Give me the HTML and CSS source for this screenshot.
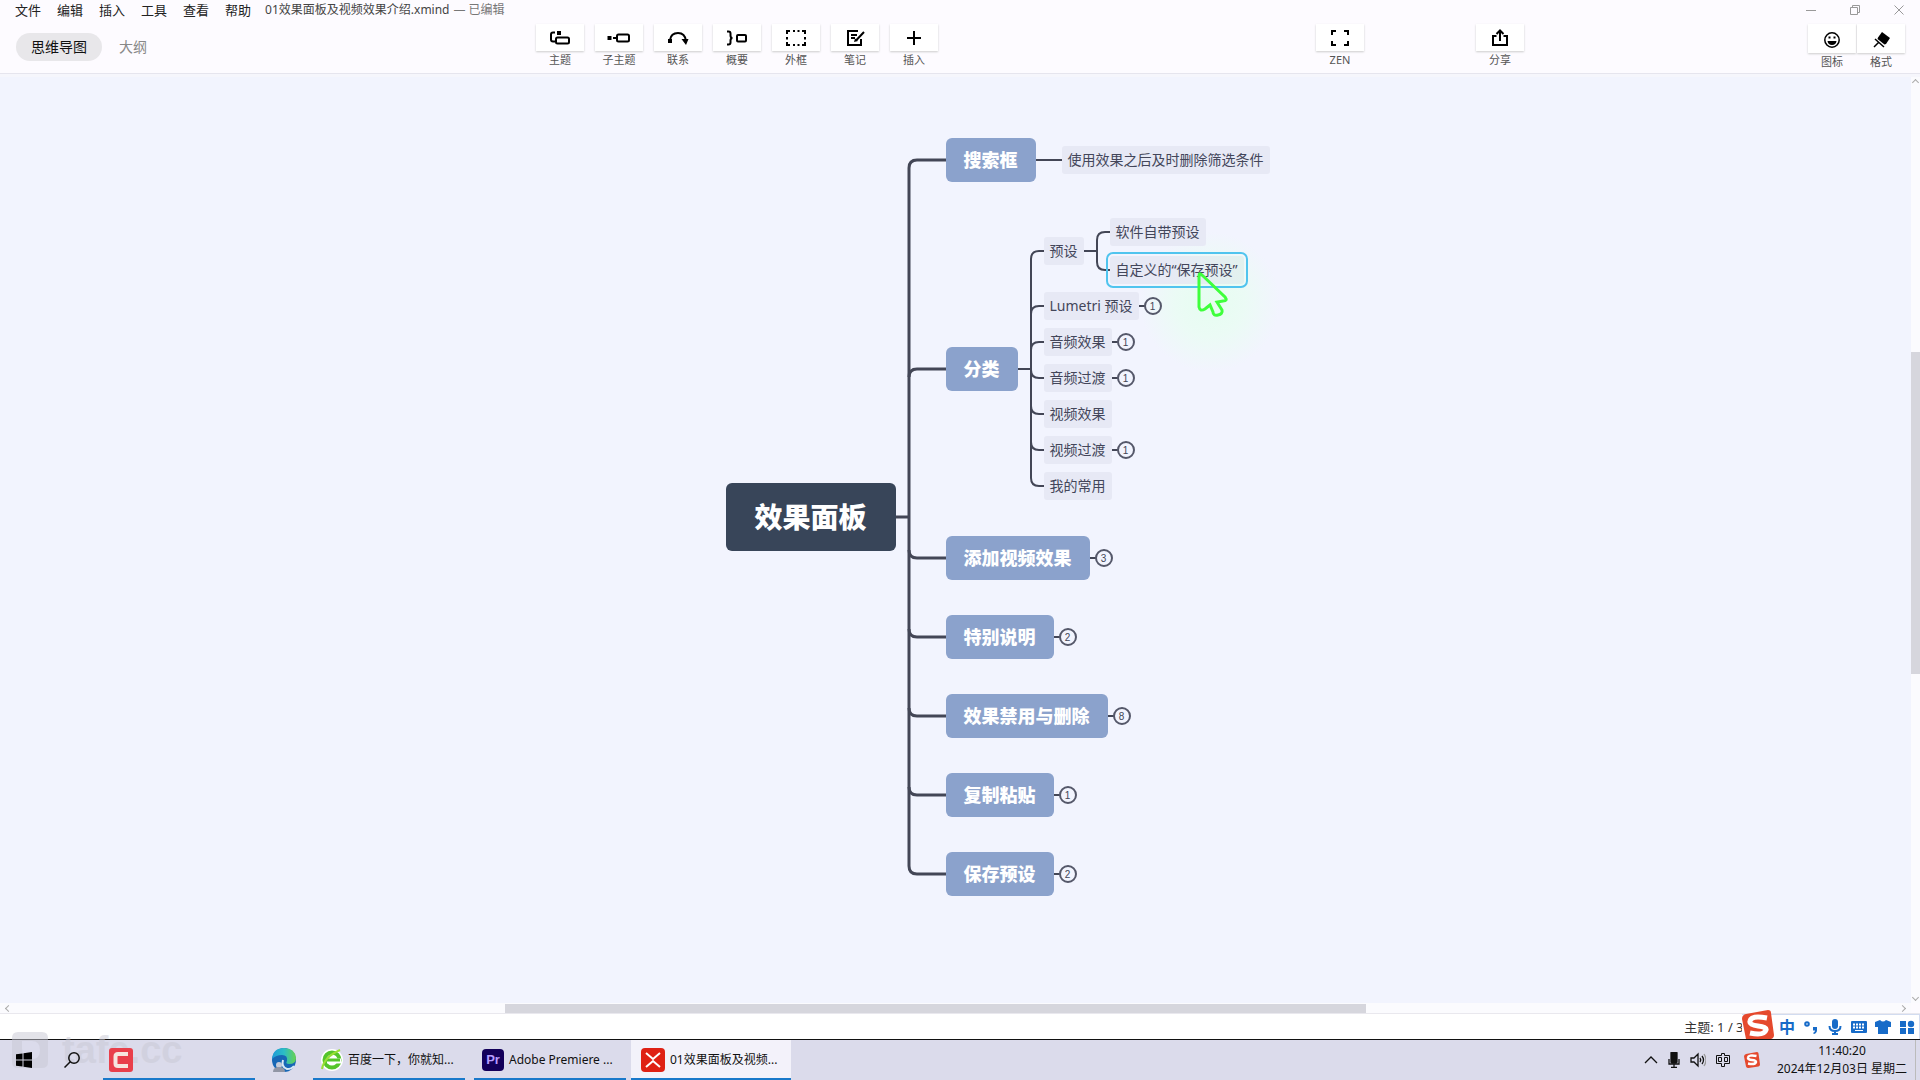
FILE: index.html
```html
<!DOCTYPE html>
<html lang="zh-CN">
<head>
<meta charset="utf-8">
<title>01效果面板及视频效果介绍.xmind</title>
<link rel="stylesheet" href="styles.css">
</head>
<body>
<header class="header">
  <div class="titlebar">
    <nav class="menu">
      <button>文件</button><button>编辑</button><button>插入</button><button>工具</button><button>查看</button><button>帮助</button>
    </nav>
    <span class="doc-name">01效果面板及视频效果介绍.xmind</span>
    <span class="doc-state">— 已编辑</span>
    <div class="window-buttons">
      <button aria-label="最小化"><svg width="12" height="12" viewBox="0 0 12 12"><path d="M1 6.500h10"/></svg></button>
      <button aria-label="还原"><svg width="12" height="12" viewBox="0 0 12 12"><path d="M1.500 3.500h7v7h-7zM3.500 3.500v-2h7v7h-2"/></svg></button>
      <button aria-label="关闭"><svg width="12" height="12" viewBox="0 0 12 12"><path d="M1.500 1.500l9 9M10.500 1.500l-9 9"/></svg></button>
    </div>
  </div>
  <div class="toolbar">
    <div class="tabs">
      <button class="tab active">思维导图</button>
      <button class="tab">大纲</button>
    </div>
    <div class="tools">
      <button class="tool"><span class="face"><svg class="ico" viewBox="0 0 22 18"><path d="M6 3.500H4q-2 0-2 2v5q0 2 2 2h2"/><rect x="7" y="8.500" width="13" height="6" rx="1.500"/><path class="solid" d="M8 2h4v4H8z"/></svg></span>主题</button>
      <button class="tool"><span class="face"><svg class="ico wide" viewBox="0 0 24 18"><rect x="10" y="5.500" width="12" height="7" rx="1.500"/><path d="M6 9h3"/><path class="solid" d="M.5 7h4v4h-4z"/></svg></span>子主题</button>
      <button class="tool"><span class="face"><svg class="ico" viewBox="0 0 22 18"><path d="M3 11q1-7 8-7t8 8"/><path class="solid" d="M1 10h4v4H1zM14.500 10h7l-2.500 6z"/></svg></span>联系</button>
      <button class="tool"><span class="face"><svg class="ico" viewBox="0 0 22 18"><path d="M1 2.500h1.500q2 0 2 2v2q0 2.500 2 2.500-2 0-2 2.500v2q0 2-2 2H1"/><rect x="11" y="6" width="9" height="6.500" rx="1"/></svg></span>概要</button>
      <button class="tool"><span class="face"><svg class="ico" viewBox="0 0 22 18"><path d="M2 5V2h3M8 2h2M12.500 2h2M17 2h3v3M20 8v2.500M20 13v3h-3M14.500 16h-2M10 16H8M5 16H2v-3M2 10.500V8"/></svg></span>外框</button>
      <button class="tool"><span class="face"><svg class="ico" viewBox="0 0 22 18"><path d="M14 2H4v14h13V10M7 6h6M7 9h4M20 3l-8 8.500"/><path class="solid" d="M11 9.500l3 2.500-4 1z"/></svg></span>笔记</button>
      <button class="tool"><span class="face"><svg class="ico" viewBox="0 0 22 18"><path d="M11 2v14M4 9h14"/></svg></span>插入</button>
    </div>
    <div class="zen">
      <button class="tool"><span class="face"><svg class="ico" viewBox="0 0 22 18"><path d="M3 6V2h4M15 2h4v4M19 12v4h-4M7 16H3v-4"/></svg></span>ZEN</button>
    </div>
    <div class="share">
      <button class="tool"><span class="face"><svg class="ico" viewBox="0 0 22 18"><path d="M7.500 7H4v9h14V7h-3.500M11 12V2M7.500 5L11 1.500 14.500 5"/></svg></span>分享</button>
    </div>
    <div class="panels">
      <button class="tool"><span class="face tall"><svg class="ico fine" viewBox="0 0 22 18"><circle cx="11" cy="9" r="7.200"/><path class="solid" d="M7.500 5.500h2v2h-2zM12.500 5.500h2v2h-2zM6.500 10h9q-.5 4-4.500 4t-4.500-4z"/></svg></span>图标</button>
      <button class="tool"><span class="face tall"><svg class="ico fine" viewBox="0 0 22 18"><path class="solid" d="M12 1l8 6-4 6-1.500.5-7-5.500.5-1.500z"/><path d="M5 8l9 8M9 11l-5 5"/></svg></span>格式</button>
    </div>
  </div>
</header>

<main class="workspace">
  <section class="canvas">
    <div class="map">
      <div class="glow"></div>
      <svg class="edges" viewBox="0 0 600 800" width="600" height="800">
        <g class="thick">
          <path d="M246 40h-29q-8 0-8 8v698q0 8 8 8h29"/>
          <path d="M196 397h13"/>
          <path d="M246 249h-29q-8 0-8 8M246 438h-29q-8 0-8-8M246 517h-29q-8 0-8-8M246 596h-29q-8 0-8-8M246 675h-29q-8 0-8-8"/>
        </g>
        <g class="thin">
          <path d="M336 40h26M318 249h13M384 131h13"/>
          <path d="M344 131h-5q-8 0-8 8v219q0 8 8 8h5"/>
          <path d="M344 186h-5q-8 0-8 8M344 222h-5q-8 0-8 8M344 258h-5q-8 0-8-8M344 294h-5q-8 0-8-8M344 330h-5q-8 0-8-8"/>
          <path d="M410 112h-5q-8 0-8 8v22q0 8 8 8h5"/>
          <path d="M439 186h6M412 222h6M412 258h6M412 330h6M390 438h6M354 517h6M408 596h6M354 675h6M354 754h6"/>
        </g>
      </svg>
      <div class="node root">效果面板</div>
      <div class="node branch b1">搜索框</div>
      <div class="node branch b2">分类</div>
      <div class="node branch b3">添加视频效果</div>
      <div class="node branch b4">特别说明</div>
      <div class="node branch b5">效果禁用与删除</div>
      <div class="node branch b6">复制粘贴</div>
      <div class="node branch b7">保存预设</div>
      <div class="node leaf l1">使用效果之后及时删除筛选条件</div>
      <div class="node leaf l2">预设</div>
      <div class="node leaf l3">软件自带预设</div>
      <div class="node leaf l4 selected">自定义的“保存预设”</div>
      <div class="node leaf l5">Lumetri 预设</div>
      <div class="node leaf l6">音频效果</div>
      <div class="node leaf l7">音频过渡</div>
      <div class="node leaf l8">视频效果</div>
      <div class="node leaf l9">视频过渡</div>
      <div class="node leaf l10">我的常用</div>
      <button class="count c1">1</button>
      <button class="count c2">1</button>
      <button class="count c3">1</button>
      <button class="count c4">1</button>
      <button class="count c5">3</button>
      <button class="count c6">2</button>
      <button class="count c7">8</button>
      <button class="count c8">1</button>
      <button class="count c9">2</button>
      <svg class="pointer" width="34" height="48" viewBox="0 0 34 48"><path d="M3 6Q3 2 6 5l23 22q3 4-2 4l-6 1 5 8q1 4-4 5t-5-3l-3-7-5 4q-5 3-6-2z"/></svg>
    </div>
  </section>
  <div class="vscroll"><i class="arrow up"></i><span class="vthumb"></span><i class="arrow down"></i></div>
  <div class="hscroll"><i class="arrow left"></i><span class="hthumb"></span><i class="arrow right"></i></div>
</main>

<footer class="status">
  <span class="topic-count">主题: 1 / 35</span>
  <div class="ime">
    <svg class="ime-logo" width="32" height="32" viewBox="0 0 32 32"><path class="red" d="M4 4L26 0q3 0 3 3l3 22q0 3-3 4L9 32q-4 0-5-3L0 9q0-4 4-5z"/><path class="s" d="M25 8q-16-3-17 3-1 4 8 5t8 4q-2 6-16 3"/></svg>
    <span class="ime-mode">中</span>
    <svg width="16" height="16" viewBox="0 0 16 16"><circle class="line" cx="4" cy="5" r="1.800"/><path class="fill" d="M10 8h4v3q0 3-3 4l-1-1q2-1 2-2.500h-2z"/></svg>
    <svg width="16" height="16" viewBox="0 0 16 16"><rect class="fill" x="5" y="0" width="6" height="10" rx="3"/><path class="line" d="M2.500 7q0 5 5.500 5t5.500-5M8 12v3M5 15h6"/></svg>
    <svg width="16" height="16" viewBox="0 0 16 16"><rect class="fill" y="2" width="16" height="12" rx="1"/><path class="dots" d="M2 5.500h12M2 8.500h12"/><path class="bar" d="M4 11.500h8"/></svg>
    <svg width="16" height="16" viewBox="0 0 16 16"><path class="fill" d="M0 3l5-2q3 3 6 0l5 2v5h-3v7H3V8H0z"/></svg>
    <svg width="16" height="16" viewBox="0 0 16 16"><path class="fill" d="M1 2h6v6H1zM1 9h6v6H1zM9 9h6v6H9z"/><circle class="fill" cx="12" cy="5" r="3.200"/></svg>
  </div>
</footer>

<footer class="taskbar">
  <div class="watermark" aria-hidden="true"><svg width="36" height="36" viewBox="0 0 36 36"><path d="M6 0h24q6 0 6 6v24q0 6-6 6H6q-6 0-6-6V6q0-6 6-6zM10 9v7q0 11 10 11 8 0 8-9t-8-9z" fill-rule="evenodd"/></svg><span>tafe.cc</span></div>
  <button class="start" aria-label="开始"><svg width="16" height="16" viewBox="0 0 16 16"><path d="M0 2.300L6.500 1.400V7.500H0zM7.500 1.200L16 0V7.500H7.500zM0 8.500H6.500V14.600L0 13.700zM7.500 8.500H16V16L7.500 14.800z"/></svg></button>
  <button class="find" aria-label="搜索"><svg width="16" height="16" viewBox="0 0 16 16"><circle cx="10" cy="6" r="5.200"/><path d="M6.300 9.700L.5 15.500"/></svg></button>
  <button class="task open camtasia" aria-label="Camtasia"><svg width="24" height="24" viewBox="0 0 24 24"><rect width="24" height="24" rx="3" fill="#e93f4b"/><path d="M19 6H9Q6.500 6 6.500 8.500v7Q6.500 18 9 18h10" fill="none" stroke="#f6e6df" stroke-width="4"/></svg></button>
  <button class="task edge" aria-label="Edge"><svg width="24" height="24" viewBox="0 0 24 24"><defs><linearGradient id="sea" x1="0" y1="0" x2="1" y2="0"><stop offset="0" stop-color="#1f9bd8"/><stop offset=".5" stop-color="#2bbdc6"/><stop offset="1" stop-color="#68d34e"/></linearGradient></defs><circle cx="12" cy="12" r="12" fill="#1767b5"/><path d="M0 11Q1 0 12 0q11 0 12 10 0 6-7 6-4 0-2-3 1-6-5-6-6 0-10 4z" fill="url(#sea)"/><path d="M11 12q-2 7 4 9 5 0 7-3" fill="none" stroke="#d9e8f5" stroke-width="2"/><circle cx="7" cy="17" r="3" fill="#c5cbd8"/><path d="M1 24q0-5 6-5t6 5z" fill="#9196a5"/></svg></button>
  <button class="task open browser"><svg width="22" height="22" viewBox="0 0 22 22"><circle cx="11" cy="11" r="11" fill="#fff"/><circle cx="11" cy="11" r="7.500" fill="none" stroke="#55c52b" stroke-width="4"/><path d="M6 12h14" stroke="#fff" stroke-width="5"/><path d="M5 11h14" stroke="#55c52b" stroke-width="3"/><path d="M1 20Q3 8 19 1" fill="none" stroke="#99df35" stroke-width="2"/></svg><span>百度一下，你就知...</span></button>
  <button class="task open premiere"><svg width="22" height="22" viewBox="0 0 22 22"><rect width="22" height="22" rx="4" fill="#13005a"/><text x="11" y="15" text-anchor="middle" fill="#b69cff">Pr</text></svg><span>Adobe Premiere ...</span></button>
  <button class="task open current"><svg width="24" height="24" viewBox="0 0 24 24"><rect width="24" height="24" rx="4" fill="#df2114"/><path d="M5 5l7 6 7-6M5 19l7-6 7 6" fill="none" stroke="#fff" stroke-width="2"/></svg><span>01效果面板及视频...</span></button>
  <div class="tray">
    <svg width="14" height="16" viewBox="0 0 14 16"><path d="M1 11l6-6 6 6"/></svg>
    <svg width="12" height="16" viewBox="0 0 12 16"><rect class="ink" x="3" y="0" width="6" height="11" rx="1"/><path d="M1 7v5h10V7M6 12v4M3 15.500h6"/></svg>
    <svg width="16" height="16" viewBox="0 0 16 16"><path d="M1 6v4h3l4 4V2L4 6zM10 6q1.500 2 0 4M12 4q3 4 0 8"/><path class="faint" d="M14 2q4 6 0 12"/></svg>
    <svg class="hair" width="14" height="16" viewBox="0 0 14 16"><path d="M5.500 1.500h3v2h5v8h-5v3h-3v-3h-5v-8h5zM2.500 5.500h3v4h-3zM8.500 5.500h3v4h-3z"/></svg>
    <svg class="ime-small" width="16" height="16" viewBox="0 0 32 32"><path class="red" d="M4 4L26 0q3 0 3 3l3 22q0 3-3 4L9 32q-4 0-5-3L0 9q0-4 4-5z"/><path class="s" d="M25 8q-16-3-17 3-1 4 8 5t8 4q-2 6-16 3"/></svg>
  </div>
  <div class="clock"><time>11:40:20</time><time>2024年12月03日 星期二</time></div>
</footer>
</body>
</html>
```
FILE: styles.css
```css
* { box-sizing: border-box; }

body {
  margin: 0;
  min-height: 100vh;
  display: flex;
  flex-direction: column;
  background: #fdfbff;
  color: #222;
  font-family: "Noto Sans", "Noto Sans CJK SC", sans-serif;
  font-size: 13px;
}

button {
  margin: 0;
  padding: 0;
  border: 0;
  background: none;
  color: inherit;
  font: inherit;
  white-space: nowrap;
}

svg { display: block; flex: none; }

/* Header */
.header { border-bottom: 1px solid #e6e5ee; box-shadow: 0 3px 0 #f6f6fc; height: 74px; position: relative; }
.titlebar { display: flex; align-items: center; height: 20px; line-height: 20px; padding-left: 15px; white-space: nowrap; }
.menu { display: flex; gap: 16px; }
.doc-name { margin-left: 14px; font-size: 12px; color: #444; }
.doc-state { margin-left: 4px; font-size: 12px; color: #777; }
.window-buttons { display: flex; gap: 32px; margin: 0 15px 0 auto; }
.window-buttons path { fill: none; stroke: #999; }

.toolbar { display: flex; align-items: flex-start; padding: 4px 15px 0 16px; }
.tabs { flex: 520 0 0; display: flex; align-items: center; gap: 2px; padding-top: 9px; }
.tab { height: 28px; padding: 0 15px; border-radius: 14px; font-size: 14px; line-height: 28px; color: #888; }
.tab.active { background: #e8e7ea; color: #111; }
.tools { display: flex; gap: 11px; }
.zen { flex: 426 0 0; display: flex; justify-content: flex-end; }
.share { flex: 160 0 0; display: flex; justify-content: flex-end; }
.panels { flex: 381 0 0; display: flex; justify-content: flex-end; gap: 1px; }
.tool { width: 48px; font-size: 11px; line-height: 18px; color: #555; text-align: center; }
.face { display: flex; align-items: center; justify-content: center; height: 27px; background: #fff; box-shadow: 0 1px 2px #ccc; }
.face.tall { height: 29px; padding-top: 2px; }
.ico { width: 22px; height: 18px; fill: none; stroke: #000; stroke-width: 2; }
.ico.wide { width: 24px; }
.ico.fine { stroke-width: 1.500; }
.ico .solid { fill: #000; stroke: none; }

/* Canvas and scroll bars */
.workspace { flex: 1; display: grid; grid-template: 1fr 10px / 1fr 9px; padding-top: 3px; }
.canvas { background: #f2f4fe; overflow: hidden; min-height: 820px; }
.map { position: relative; width: 600px; height: 800px; margin: 43px 0 0 calc(50% - 256px); }
.edges { position: absolute; left: 0; top: 0; fill: none; stroke: #434656; }
.thick { stroke-width: 3; }
.thin { stroke-width: 2; }

.node { position: absolute; white-space: nowrap; }
.root { left: 26px; top: 363px; padding: 0 29px; border-radius: 6px; background: #384559; color: #fff; font-size: 28px; font-weight: 900; line-height: 68px; }
.branch { left: 246px; padding: 0 18px; border-radius: 6px; background: #8ba2cc; color: #fff; font-size: 18px; font-weight: 900; line-height: 44px; }
.b1 { top: 18px; }
.b2 { top: 227px; }
.b3 { top: 416px; }
.b4 { top: 495px; }
.b5 { top: 574px; }
.b6 { top: 653px; }
.b7 { top: 732px; }
.leaf { left: 344px; padding: 0 6px; border-radius: 3px; background: #e7e9f5; color: #43465a; font-size: 14px; line-height: 28px; }
.l1 { left: 362px; top: 26px; }
.l2 { top: 117px; }
.l3 { left: 410px; top: 98px; }
.l4 { left: 410px; top: 136px; }
.l5 { top: 172px; }
.l6 { top: 208px; }
.l7 { top: 244px; }
.l8 { top: 280px; }
.l9 { top: 316px; }
.l10 { top: 352px; }
.selected { background: linear-gradient(90deg, #e7e9f5 40%, #e2f1ee); outline: 2px solid #50c4ee; outline-offset: 2px; }

.count { position: absolute; width: 18px; height: 18px; border: 2px solid #55586a; border-radius: 50%; font-family: "Liberation Sans", sans-serif; font-size: 10px; line-height: 15px; color: #434656; text-align: center; }
.c1 { left: 444px; top: 177px; }
.c2 { left: 417px; top: 213px; }
.c3 { left: 417px; top: 249px; }
.c4 { left: 417px; top: 321px; }
.c5 { left: 395px; top: 429px; }
.c6 { left: 359px; top: 508px; }
.c7 { left: 413px; top: 587px; }
.c8 { left: 359px; top: 666px; }
.c9 { left: 359px; top: 745px; }

.glow { position: absolute; left: 440px; top: 112px; width: 140px; height: 140px; background: radial-gradient(closest-side, #e6fdf0, #ebfbf5 50%, #f2f4fe); }
.pointer { position: absolute; left: 496px; top: 150px; fill: none; stroke: #3fff3c; stroke-width: 3; }

.vscroll, .hscroll { display: flex; align-items: center; justify-content: space-between; background: #fbfbfe; }
.vscroll { flex-direction: column; padding: 3px 0; }
.vthumb { width: 100%; height: 35%; margin-bottom: 54px; background: #d6d6dd; }
.hscroll { padding: 0 6px; }
.hthumb { width: calc(45% + 6px); height: 9px; background: #d6d6dd; margin-right: 40px; }
.arrow { width: 5px; height: 5px; border: solid #aaa; border-width: 1px 0 0 1px; }
.up { transform: rotate(45deg); }
.down { transform: rotate(225deg); }
.left { transform: rotate(-45deg); }
.right { transform: rotate(135deg); }

/* Status bar */
.status { display: flex; justify-content: flex-end; align-items: center; height: 26px; border-top: 1px solid #e9e8ee; background: #fff; line-height: 20px; }
.topic-count { color: #333; white-space: nowrap; }
.ime { position: relative; display: flex; align-items: center; gap: 8px; width: 178px; height: 25px; margin-left: -9px; padding-left: 37px; border: 1px solid #d2dcf0; border-width: 1px 1px 0 0; background: #fff; color: #176bc8; }
.ime-logo { position: absolute; left: 0; top: -5px; }
.ime-mode { width: 16px; font-size: 16px; font-weight: 700; }
.red { fill: #e5492d; }
.s { fill: none; stroke: #fff; stroke-width: 5; }
.fill { fill: #176bc8; }
.line { fill: none; stroke: #176bc8; stroke-width: 2; }
.dots { stroke: #fff; stroke-width: 2; stroke-dasharray: 2 1; }
.bar { stroke: #fff; stroke-width: 1; }

/* Taskbar */
.taskbar { position: relative; display: flex; align-items: stretch; height: 41px; border-top: 1px solid #111; background: #dbdbeb; color: #111; }
.watermark { position: absolute; left: 12px; top: -10px; display: flex; align-items: center; gap: 14px; color: #c9c9d4; fill: #c9c9d4; opacity: .5; font-family: "Liberation Sans", sans-serif; font-size: 38px; font-weight: 700; line-height: 40px; }
.start { width: 48px; padding-left: 16px; position: relative; }
.find { width: 48px; padding-left: 16px; position: relative; fill: none; stroke: #111; stroke-width: 1.500; }
.task { position: relative; display: flex; align-items: center; gap: 5px; width: 152px; margin-left: 9px; padding: 2px 0 0 8px; border-bottom: 2px solid transparent; font-size: 12px; line-height: 20px; }
.task.open { border-bottom-color: #1979ca; }
.camtasia { margin-left: 7px; padding-left: 6px; }
.edge { width: 48px; margin-left: 5px; padding-left: 12px; }
.browser { margin-left: 5px; }
.current { width: 160px; margin-left: 5px; padding-left: 10px; background: #f3f2fa; }
.premiere text { font-family: "Liberation Sans", sans-serif; font-size: 13px; font-weight: 700; }
.tray { display: flex; align-items: center; gap: 10px; margin: 0 9px 0 auto; fill: none; stroke: #111; stroke-width: 1.300; }
.hair { stroke-width: 1; }
.ink { fill: #111; }
.faint { stroke: #999; }
.ime-small { margin-left: 4px; stroke: none; }
.ime-small .s { stroke: #fff; }
.clock { display: flex; flex-direction: column; justify-content: center; width: 147px; margin-right: 4px; border-right: 1px solid #bbb; text-align: center; font-size: 12px; line-height: 18px; white-space: nowrap; }
```
